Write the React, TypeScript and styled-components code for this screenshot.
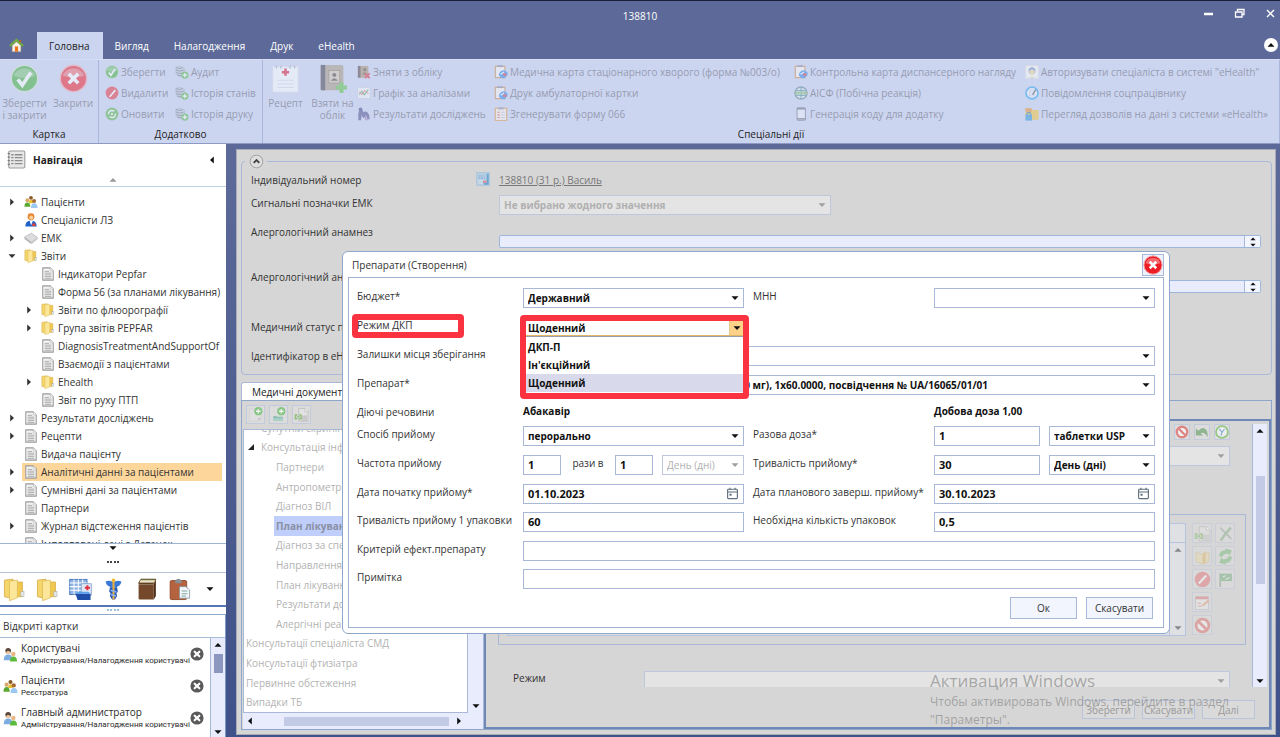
import React from "react";
import styled, { createGlobalStyle } from "styled-components";

const Global = createGlobalStyle`
  * { box-sizing: border-box; }
  body { margin: 0; background: #4a5a90; }
  body, button, input, select { font-family: "Open Sans", "Noto Sans", sans-serif; font-size: 10px; color: #333; }
  ul { list-style: none; margin: 0; padding: 0; }
  button { padding: 0; border: 0; background: none; }
`;

const line = "#a9b7d8";

/* ---------- icons ---------- */

const Svg = styled.svg<{ $s?: number }>`
  display: block;
  flex: none;
  width: ${(p) => p.$s ?? 16}px;
  height: ${(p) => p.$s ?? 16}px;
`;

type IconName =
  | "home" | "check" | "cross" | "edit" | "refresh" | "audit" | "recipe" | "bookPlus" | "bookX" | "chart" | "lungs"
  | "pageE" | "form" | "globe" | "phone" | "user" | "note" | "folderLock" | "doc" | "folder" | "people" | "doctor"
  | "disc" | "list" | "building" | "caduceus" | "book" | "clipboard" | "card" | "users" | "closeDot" | "calendar"
  | "pageAdd" | "folderAdd" | "pageLink" | "ban" | "undo" | "clock" | "tools" | "openBook" | "arrows" | "flag" | "redit"
  | "noEntry";

const shapes: Record<IconName, React.ReactNode> = {
  home: (
    <>
      <path d="M3.500 8v6.500h9V8L8 4z" fill="#f7f3ea" stroke="#c9b79a" strokeWidth=".6" />
      <path d="M1 8.600 8 2l7 6.600" fill="none" stroke="#6fae3c" strokeWidth="2.200" />
      <path d="M11 2h2v3.500l-2-2z" fill="#b5642f" />
      <rect x="6.300" y="9" width="3.400" height="5.500" fill="#e8741c" />
    </>
  ),
  check: (
    <>
      <circle cx="8" cy="8" r="7.300" fill="#3fae35" stroke="#cfe3cf" strokeWidth=".8" />
      <path d="M2 6.500a6.200 5.500 0 0 1 12 0q-6 2.500-12 0z" fill="#fff" opacity=".3" />
      <path d="m4.300 8.500 2.500 3.200 4.700-7" fill="none" stroke="#fff" strokeWidth="2" />
    </>
  ),
  cross: (
    <>
      <circle cx="8" cy="8" r="7.300" fill="#ee1c24" stroke="#f1a6a9" strokeWidth=".8" />
      <path d="M2 6.500a6.200 5.500 0 0 1 12 0q-6 2-12 0z" fill="#fff" opacity=".35" />
      <path d="m5.400 5.400 5.200 5.200m0-5.200-5.200 5.200" stroke="#fff" strokeWidth="2" />
    </>
  ),
  edit: (
    <>
      <circle cx="8" cy="8" r="7.300" fill="#e8343c" />
      <path d="m4.500 12 6.500-8 1.500 1.300L6 12.800z" fill="#fff" />
    </>
  ),
  refresh: (
    <>
      <circle cx="8" cy="8" r="7.300" fill="#57b548" />
      <circle cx="8" cy="8" r="4" fill="none" stroke="#fff" strokeWidth="1.600" strokeDasharray="9 3" />
      <circle cx="8" cy="8" r="1.200" fill="#fff" />
    </>
  ),
  audit: (
    <>
      <path d="M1 2.500q4-2 8 0l2 1.500v8q-5 2.500-8 0L1 9z" fill="#c4ccd6" stroke="#8f9aa8" strokeWidth=".6" />
      <path d="M1 3q4 2 8 0M1 5.800q4 2.500 9 0M1.500 8.600q4 2.500 9 0M2.500 11.300q3 1.500 5 .7" fill="none" stroke="#5f6c7e" strokeWidth="1" />
      <circle cx="11.200" cy="11.500" r="4.200" fill="#58b84c" />
      <path d="M11.200 9v5M8.700 11.500h5" stroke="#fff" strokeWidth="1.400" />
    </>
  ),
  recipe: (
    <>
      <rect x="1" y="1.500" width="14" height="14" fill="#fff" stroke="#dcdfea" strokeWidth=".5" />
      <path d="M3 1v1.500M5.500 1v1.500M10.500 1v1.500M13 1v1.500" stroke="#9aa2b5" strokeWidth=".7" />
      <path d="M8 2.500v4M6 4.500h4" stroke="#e0152e" strokeWidth="1.400" />
      <path d="M3.500 9h9M3.500 11h9M3.500 13h9" stroke="#d9dce8" strokeWidth=".6" />
    </>
  ),
  bookPlus: (
    <>
      <rect x="1.500" y=".5" width="12.500" height="14" rx="1" fill="#a89880" />
      <rect x="1.500" y=".5" width="2.500" height="14" fill="#3d3d46" />
      <rect x="6" y="3.500" width="6" height="7" fill="#d2c6ae" stroke="#7c6a48" strokeWidth=".4" />
      <circle cx="9" cy="6" r="1.100" fill="#4c4034" />
      <path d="M7 9.300q2-3 4 0z" fill="#4c4034" />
      <path d="M13 10v6M10 13h6" stroke="#57c23e" strokeWidth="2.200" />
    </>
  ),
  bookX: (
    <>
      <rect x="1" y="1" width="12" height="13.500" rx="1" fill="#a98d6a" />
      <rect x="1" y="1" width="3" height="13.500" fill="#4b4242" />
      <circle cx="8.800" cy="5.500" r="1.700" fill="#4d4136" />
      <path d="M6 10.500q2.800-4 5.600 0z" fill="#4d4136" />
      <path d="m9 9.500 5.500 5.500m0-5.500L9 15" stroke="#e02a3a" strokeWidth="2" />
    </>
  ),
  chart: (
    <>
      <rect x=".8" y="1.500" width="14.400" height="13" fill="#f4f5f8" stroke="#c0c6d4" strokeWidth=".8" />
      <path d="m2.500 10 3-4 3 4 4.500-6" fill="none" stroke="#4aa84a" strokeWidth="1.200" />
      <path d="m2.500 6.500 3 3.500 3.500-5 4 4" fill="none" stroke="#e05a5a" strokeWidth="1.100" />
    </>
  ),
  lungs: (
    <>
      <path d="M3 1.500q2-1 3 1.500l1.500 3q2-2 4.500 0 2.500 2.500 2.500 8h-2.500l-2-5-1.500 3.500H7L5.500 9l-1 6H1.500q-.5-8 1.500-13.500z" fill="#4a4f8c" />
      <circle cx="4" cy="2.500" r="2" fill="#3d4584" />
      <path d="M10 9v5.500h2" stroke="#9a6ab0" strokeWidth="1.300" fill="none" />
    </>
  ),
  pageE: (
    <>
      <path d="M1.500 1.500h11v13h-11z" fill="#fbf7ef" stroke="#c88a4a" strokeWidth="1.300" />
      <rect x="4" y=".3" width="6" height="2" fill="#7c86a0" />
      <path d="M6 9q4-5.500 9.500-.5v3l-3.500 3.500q-4.500.5-6.500-3z" fill="#2a88ec" />
      <path d="m7.500 10.500 4-2.500" stroke="#fff" strokeWidth="1.200" />
      <rect x="10.500" y="9.500" width="3.500" height="3" fill="#e0353a" />
    </>
  ),
  form: (
    <>
      <rect x="1.500" y="1.500" width="13" height="14" fill="#fdf3e8" stroke="#e0984a" strokeWidth="1.400" />
      <rect x="5" y=".3" width="6" height="2.500" fill="#8c94a8" />
      <path d="M4 6h2.500M4 9h2.500M4 12h2.500" stroke="#e05050" strokeWidth="1.200" />
      <path d="M8 6h4.500M8 9h4.500M8 12h4.500" stroke="#a8b4cc" strokeWidth=".8" />
    </>
  ),
  globe: (
    <>
      <circle cx="8" cy="8" r="6.800" fill="#e2eeea" stroke="#5f8494" strokeWidth="1.700" />
      <path d="M2.500 5.300h11M2.500 10.700h11M8 1.500v13" stroke="#3a8494" strokeWidth="1.100" />
      <rect x="1" y="6.500" width="14" height="3" fill="#6cb05a" />
      <path d="M3 8h10" stroke="#fff" strokeWidth=".8" strokeDasharray="2 1" />
    </>
  ),
  phone: (
    <>
      <rect x="3.500" y=".8" width="9.500" height="14.400" rx="1" fill="#eef1fa" stroke="#5c6478" strokeWidth="1" />
      <path d="M3.500 2.200h9.500M3.500 13.500h9.500" stroke="#4c5468" strokeWidth="1.500" />
    </>
  ),
  user: (
    <>
      <rect x="1" y="1" width="14" height="14" fill="#fffdf2" stroke="#e8e4d0" strokeWidth=".6" />
      <circle cx="8" cy="6.500" r="4" fill="#6c8fc0" />
      <path d="M5 6.500q3-2.500 6 0v3q-3 4-6 0z" fill="#f0d890" />
      <path d="M4 15q4-4 8 0z" fill="#e4dca8" />
    </>
  ),
  note: (
    <>
      <circle cx="8" cy="8" r="6.800" fill="#f8fbff" stroke="#2aa4f0" strokeWidth="2" />
      <path d="M5 4.500h6v7H5z" fill="#e6ebf2" stroke="#a4b0c0" strokeWidth=".5" />
      <path d="m8.500 10 4-6" stroke="#3a4454" strokeWidth="1.500" />
    </>
  ),
  folderLock: (
    <>
      <path d="M.5 1.500H7l1 2h7.500v11H.5z" fill="#f4c430" />
      <path d="M.5 1.500H7l1 2v1.500H.5z" fill="#e88a2c" />
      <rect x=".5" y="8.500" width="7.500" height="7" fill="#2a94dc" />
      <path d="M2.300 8.500V7q2-2 4 0v1.500" fill="none" stroke="#1a6ab0" strokeWidth="1.300" />
    </>
  ),
  doc: (
    <>
      <path d="M2 1h8.500L14 4.500V15H2z" fill="#f2f2f2" stroke="#9a9a9a" strokeWidth="1.200" strokeLinejoin="round" />
      <path d="M10.500 1v3.500H14" fill="#fff" stroke="#b0b0b0" strokeWidth=".7" />
      <path d="M4.200 5h5M4.200 7h7.600M4.200 9h7.600M4.200 11h7.600M4.200 13h7.600" stroke="#a4a4a4" strokeWidth="1" />
    </>
  ),
  folder: (
    <>
      <path d="M1 1.500 7 .8v13.500L1 13z" fill="#f4d66c" stroke="#d8ae48" strokeWidth=".6" />
      <path d="M8 2.800h5.500V13H8z" fill="#f0c850" stroke="#d8ae48" strokeWidth=".6" />
      <path d="M4.500 2.200 10 1.500v12.300l-5.500 2z" fill="#fbe69a" stroke="#dcb850" strokeWidth=".5" />
      <rect x="12.400" y="9.500" width="2.200" height="3.300" fill="#e4e8ee" stroke="#a8b0a0" strokeWidth=".4" />
    </>
  ),
  people: (
    <>
      <circle cx="8" cy="3.200" r="2.200" fill="#8a5a2c" />
      <path d="M5.500 9.500q0-4 2.500-4t2.500 4z" fill="#e8c030" />
      <circle cx="3.800" cy="6" r="2.200" fill="#d8a868" />
      <path d="M.5 13.500q0-5 3.300-5t3.400 5z" fill="#5aa832" />
      <circle cx="11.500" cy="6.800" r="2.300" fill="#a86a34" />
      <path d="M8 14.800q0-5.300 3.700-5.300t3.800 5.300z" fill="#9cc8f4" />
    </>
  ),
  doctor: (
    <>
      <circle cx="8" cy="4.300" r="3.900" fill="#e8842c" />
      <circle cx="8.200" cy="5.300" r="2.400" fill="#f8cf9c" />
      <path d="M1.500 15.500q0-7 6.500-7t6.500 7z" fill="#1f62c8" />
      <path d="M6.200 8.600 8.200 14l2-5.400z" fill="#fff" />
      <rect x="9.500" y="12" width="3.500" height="3" fill="#e84030" />
    </>
  ),
  disc: (
    <>
      <path d="m.5 7 8-4.500 7 5-7 5.500z" fill="#dcdcde" stroke="#a8a8ac" strokeWidth=".7" />
      <path d="m.5 7 8 6v2L.5 9z" fill="#b4b4b8" />
      <path d="m15.500 7.500-7 5.500v2l7-5.500z" fill="#c8c8cc" />
    </>
  ),
  list: (
    <>
      <rect x="1.500" y=".8" width="13.500" height="14.400" rx="1" fill="#e8e8e8" stroke="#9a9a9a" strokeWidth=".9" />
      <path d="M3.500 4h2M3.500 6.500h2M3.500 9h2M3.500 11.500h2M6.500 4h6.500M6.500 6.500h6.500M6.500 9h6.500M6.500 11.500h6.500" stroke="#8c8c8c" strokeWidth="1.100" />
      <path d="M.5 3h2M.5 6h2M.5 9h2M.5 12h2" stroke="#6c6c6c" strokeWidth=".8" />
    </>
  ),
  building: (
    <>
      <rect x=".5" y="1" width="12" height="10.500" fill="#8fb4e4" stroke="#4a7cc0" strokeWidth=".7" />
      <path d="M.5 3.500h12M.5 6h12M.5 8.500h12M3.500 1v10.500M6.500 1v10.500M9.500 1v10.500" stroke="#fff" strokeWidth=".7" />
      <rect x="8.500" y="4" width="7" height="8" fill="#dfe8f6" stroke="#7898c8" strokeWidth=".5" />
      <path d="M12.800 5v3.600M11 6.800h3.600" stroke="#e03040" strokeWidth="1.300" />
      <path d="M4.500 11h10.500v4.300H6z" fill="#1f4fa8" />
      <path d="m4.500 11 2-1.500h7L15 11z" fill="#5aa0ec" />
    </>
  ),
  caduceus: (
    <>
      <path d="M2.500 2.500q3-1.500 5.500.5 2.500-2 5.500-.5-.5 4-5.500 4T2.500 2.500z" fill="#3a78d8" />
      <path d="M5.500 6.500h5l.5 3-1 1 .5 2-1.500 2.500H7L5.500 12.500l.5-2-1-1z" fill="#2458b8" />
      <path d="M8 1v14" stroke="#e8b040" strokeWidth="1.400" />
      <path d="m6 8.500 4 1.200M6.200 11.500l3.600 1" stroke="#8cb4f0" strokeWidth="1" />
      <circle cx="8" cy="1.600" r="1.300" fill="#f0b830" />
    </>
  ),
  book: (
    <>
      <path d="m2.500 3.500 1.500-2.500h10.500l-1 2.500z" fill="#e8e0c8" stroke="#6c4a28" strokeWidth=".6" />
      <path d="M4 1h10.500" stroke="#6a6a38" strokeWidth="1" />
      <path d="M2.500 4.500h10.500V15H3.500q-1 0-1-1z" fill="#74482a" />
      <path d="M13 4.500 14.500 1.500v11L13 15z" fill="#4c2c14" />
      <path d="M2.500 4h10.500" stroke="#54340f" strokeWidth=".9" />
    </>
  ),
  clipboard: (
    <>
      <rect x="1.500" y="1.800" width="11.500" height="13.200" rx="1" fill="#b5623e" stroke="#8c4424" strokeWidth=".6" />
      <path d="M5 3.600V1.800q2.200-2.400 4.500 0v1.800z" fill="#8a9098" />
      <path d="M8 6h4.500L15 8.300V14H8z" fill="#f4f7fa" stroke="#8a9aa4" strokeWidth=".6" />
      <path d="M9.500 9h4M9.500 11h4M9.500 12.500h3" stroke="#7ca8a0" strokeWidth=".7" />
    </>
  ),
  card: (
    <>
      <rect x=".5" y=".5" width="15" height="15" fill="#b4cde2" stroke="#9fbdd8" strokeWidth=".5" />
      <path d="M3 4.500h7M3 7h7" stroke="#8fb2d6" strokeWidth="1.200" strokeDasharray="2 1" />
      <path d="M2.500 10h6M2.500 12.500h5" stroke="#dde8f0" strokeWidth="1.200" />
      <path d="M12.300 2h2.200v12.500H9v-2h3.300z" fill="#6aa6d4" />
      <rect x="8" y="10" width="4.300" height="2.300" fill="#d88c94" />
    </>
  ),
  users: (
    <>
      <circle cx="5.500" cy="4" r="3" fill="#5c4a3c" />
      <path d="M3.500 5q2-1.500 4 0v2q-2 1.500-4 0z" fill="#f0c8a0" />
      <path d="M.8 14q0-6 4.700-6t4.700 6z" fill="#7cace0" />
      <circle cx="11" cy="7.500" r="2.400" fill="#e8b888" />
      <path d="M7.500 15.500q0-5.500 3.700-5.500t3.800 5.500z" fill="#5cba3c" />
    </>
  ),
  closeDot: (
    <>
      <circle cx="8" cy="8" r="7.500" fill="#5a5a5a" />
      <path d="m5.300 5.300 5.400 5.400m0-5.400-5.400 5.400" stroke="#fff" strokeWidth="2.400" strokeLinecap="round" />
    </>
  ),
  calendar: (
    <>
      <rect x="2" y="2.800" width="12" height="11.500" rx="1" fill="none" stroke="#5f6f7c" strokeWidth="1.400" />
      <path d="M2 6.200h12M4.800 1v2.500M11.200 1v2.500" stroke="#5f6f7c" strokeWidth="1.400" />
      <rect x="4.300" y="8.300" width="2.600" height="2.400" fill="#5f6f7c" />
    </>
  ),
  pageAdd: (
    <>
      <path d="M1.500 2h13v10l-3 3h-10z" fill="#e2e2e2" stroke="#c0c4cc" strokeWidth=".6" />
      <path d="m9.500 13 4-2-1 3z" fill="#b4b4b4" />
      <circle cx="11" cy="4.500" r="4.400" fill="#4fb84a" />
      <path d="M11 2v5M8.500 4.500h5" stroke="#fff" strokeWidth="1.400" />
    </>
  ),
  folderAdd: (
    <>
      <path d="M2.500 9.500h3l1 1h6V15h-10z" fill="#5cae9c" />
      <path d="M2.500 12h10v3h-10z" fill="#8ccabc" />
      <circle cx="11" cy="4.500" r="4.400" fill="#4fb84a" />
      <path d="M11 2v5M8.500 4.500h5" stroke="#fff" strokeWidth="1.400" />
    </>
  ),
  pageLink: (
    <>
      <path d="M5 1.500h6.500L15 5v10H5z" fill="#e6e6e6" stroke="#a4a4a4" strokeWidth=".8" />
      <path d="M11.500 1.500V5H15" fill="#fff" stroke="#9c9c9c" strokeWidth=".6" />
      <path d="M8 9h6v6H8z" fill="#bdbdbd" />
      <path d="M3.500 8.500h-2v4h2M5.500 8.500h2v4h-2M3 10.500h3" fill="none" stroke="#5fae3c" strokeWidth="1.500" />
    </>
  ),
  ban: (
    <>
      <circle cx="8" cy="8" r="7.300" fill="#e85058" />
      <path d="m4.500 11.800 7-7.600" stroke="#fff" strokeWidth="2.200" />
    </>
  ),
  undo: (
    <>
      <path d="M1 4v8h8L6.500 9.500q4-2.500 8 4.500.5-10-5.500-10.500Q6.500 3.500 4 6.500z" fill="#5c9a5c" />
    </>
  ),
  clock: (
    <>
      <circle cx="8" cy="8" r="6.800" fill="#f4f8fc" stroke="#6ab848" strokeWidth="2" />
      <path d="m5 4.500 3 4 2.800-4M8 8.500 7 12" stroke="#4c8cc8" strokeWidth="1.200" fill="none" />
    </>
  ),
  tools: (
    <>
      <path d="M3 2.500 13.500 13" stroke="#8a9a94" strokeWidth="1.800" />
      <path d="M13 2.500 7.500 9l-4 5.500" stroke="#6aa06a" strokeWidth="2.400" fill="none" />
    </>
  ),
  openBook: (
    <>
      <path d="m2 4 6 2 6-2v9l-6 2-6-2z" fill="#f0dc9c" stroke="#c8a85c" strokeWidth=".6" />
      <path d="M8 6v9l3-1V2z" fill="#e0a840" />
    </>
  ),
  arrows: (
    <>
      <path d="M2 8q0-6 6-6l-.5-1.500L14 2l-2 5-1.500-1.500Q6 5 5.500 8z" fill="#55b058" />
      <path d="M14 8q0 6-6 6l.5 1.500L2 14l2-5 1.500 1.500Q10 11 10.500 8z" fill="#55b058" />
    </>
  ),
  flag: (
    <>
      <path d="M3 2v13" stroke="#6c8c6c" strokeWidth="1.500" />
      <path d="M3 2.500h11v7H3z" fill="#4c9c5c" />
      <path d="M5.500 5.500 8 4.500M8 8l4-2" stroke="#fff" strokeWidth="1" />
    </>
  ),
  redit: (
    <>
      <rect x="1.500" y="2.500" width="12" height="12" fill="#f4f4f8" stroke="#a0a8c0" strokeWidth=".8" />
      <path d="M1.500 2.500h12v2.500h-12z" fill="#e05a5a" />
      <path d="m8 11 6-5" stroke="#e89060" strokeWidth="2" />
      <path d="M3.500 11.500h4M3.500 8.500h3" stroke="#d88080" strokeWidth="1.200" />
    </>
  ),
  noEntry: (
    <>
      <circle cx="8" cy="8" r="6" fill="#fff" stroke="#e04a48" strokeWidth="2.600" />
      <path d="m4 4 8 8" stroke="#e04a48" strokeWidth="2.600" />
    </>
  ),
};

const Icon = ({ name, s }: { name: IconName; s?: number }) => (
  <Svg viewBox="0 0 16 16" $s={s} aria-hidden="true">{shapes[name]}</Svg>
);

const turns = { up: 180, down: 0, left: 90, right: 270 };
const ArrowSvg = styled.svg<{ $dir: keyof typeof turns }>`
  display: block;
  flex: none;
  width: 8px;
  height: 8px;
  pointer-events: none;
  transform: rotate(${(p) => turns[p.$dir]}deg);
`;
const Arrow = ({ dir = "down", color = "#111" }: { dir?: keyof typeof turns; color?: string }) => (
  <ArrowSvg viewBox="0 0 8 8" $dir={dir} aria-hidden="true"><path d="M.5 2.200h7L4 6z" fill={color} /></ArrowSvg>
);

/* ---------- window frame ---------- */

const Window = styled.div`
  position: relative;
  display: flex;
  flex-direction: column;
  height: 100vh;
  overflow: hidden;
  background: linear-gradient(#5d6a99, #5d6a99 144px, #3f5189);
`;
const TitleBar = styled.header`
  display: grid;
  grid-template-columns: 1fr auto 1fr;
  height: 32px;
  border-top: 1px solid #1b2036;
  color: #fff;
  line-height: 31px;
`;
const Title = styled.h1`
  margin: 0;
  font-size: 10px;
  font-weight: 400;
`;
const WindowButtons = styled.div`
  display: flex;
  justify-content: flex-end;
  gap: 17px;
  padding: 5px 2px 0 0;
`;
const WindowButton = styled.button`
  width: 14px;
  height: 14px;
`;
const TabBar = styled.nav`
  display: flex;
  align-items: stretch;
  height: 27px;
  padding-right: 1px;
`;
const HomeButton = styled.button`
  display: grid;
  place-items: center;
  width: 37px;
  padding-right: 4px;
`;
const RibbonTab = styled.button<{ $active?: boolean }>`
  padding: 0 13px 0 12px;
  background: ${(p) => (p.$active ? "#ccd5f0" : "none")};
  color: ${(p) => (p.$active ? "#222" : "#fff")};
`;
const CollapseButton = styled.button`
  display: grid;
  place-items: center;
  width: 14px;
  height: 14px;
  margin: 6px 1px 0 auto;
  border-radius: 50%;
  background: #fff;
`;

/* ---------- ribbon ---------- */

const Ribbon = styled.div`
  display: flex;
  height: 85px;
  background: #ccd5f0;
  border-top: 1px solid #d6def4;
  border-bottom: 1px solid #8d9bc4;
`;
const RibbonGroup = styled.section<{ $w?: number }>`
  display: flex;
  flex-direction: column;
  flex: ${(p) => (p.$w ? `none` : "1")};
  width: ${(p) => (p.$w ? `${p.$w}px` : "auto")};
  min-width: 0;
  border-right: 1px solid #a9b6dc;
`;
const RibbonBody = styled.div`
  display: flex;
  flex: 1;
  padding-top: 1px;
`;
const GroupLabel = styled.h2`
  margin: 0;
  font-size: 10px;
  font-weight: 400;
  line-height: 18px;
  text-align: center;
  color: #222;
`;
const BigButton = styled.button<{ $w: number }>`
  display: flex;
  flex-direction: column;
  align-items: center;
  gap: 4px;
  flex: none;
  width: ${(p) => p.$w}px;
  padding-top: 3px;
  line-height: 12px;
  color: #969cb0;
  svg { opacity: 0.5; }
`;
const RibbonColumn = styled.div<{ $w: number }>`
  flex: none;
  width: ${(p) => p.$w}px;
`;
const SmallButton = styled.button`
  display: flex;
  align-items: center;
  gap: 2px;
  height: 21px;
  color: #969cb0;
  white-space: nowrap;
  svg { opacity: 0.5; }
`;
const Column = ({ w, items }: { w: number; items: [IconName, string][] }) => (
  <RibbonColumn $w={w}>
    {items.map(([icon, text]) => (
      <SmallButton key={text}><Icon name={icon} s={14} />{text}</SmallButton>
    ))}
  </RibbonColumn>
);

/* ---------- sidebar ---------- */

const Body = styled.div`
  display: flex;
  flex: 1;
  min-height: 0;
`;
const Sidebar = styled.aside`
  display: flex;
  flex-direction: column;
  flex: none;
  width: 226px;
  background: #fff;
`;
const NavHead = styled.div`
  height: 43px;
  border-bottom: 1px solid #bfd3e2;
`;
const NavTitle = styled.div`
  display: flex;
  align-items: center;
  gap: 7px;
  height: 32px;
  padding: 0 10px 1px 7px;
  font-weight: 700;
  color: #222;
  button { margin-left: auto; }
`;
const NavList = styled.ul`
  flex: 1;
  min-height: 0;
  padding: 6px 4px 0 8px;
  overflow: hidden;
`;
const NavItem = styled.li<{ $level: number }>`
  display: flex;
  align-items: center;
  height: 18px;
  padding-left: ${(p) => p.$level * 17}px;
  white-space: nowrap;
`;
const Twist = styled.span`
  width: 14px;
`;
const NavLabel = styled.span<{ $selected?: boolean }>`
  display: flex;
  align-items: center;
  gap: 3px;
  flex: 1;
  min-width: 0;
  height: 18px;
  padding-left: 2px;
  overflow: hidden;
  background: ${(p) => (p.$selected ? "#fdd69b" : "none")};
`;
const ScrollHint = styled.div`
  display: flex;
  justify-content: center;
`;
const GripBar = styled.div<{ $h: number }>`
  display: flex;
  flex-direction: column;
  align-items: center;
  justify-content: space-between;
  height: ${(p) => p.$h}px;
  padding: 2px 0;
`;
const Grip = styled.span<{ $color: string }>`
  width: 12px;
  border-top: 2px dotted ${(p) => p.$color};
`;
const NavFoot = styled.div`
  border-top: 1px solid #9db4d2;
`;
const Shortcuts = styled.div`
  display: flex;
  align-items: center;
  gap: 10px;
  height: 35px;
  padding: 0 12px 0 3px;
  border-top: 1px solid #b4c6de;
  border-bottom: 2px solid #5577b5;
  button:last-child { margin-left: auto; }
`;
const Cards = styled.section`
  flex: none;
  height: 123px;
  border-top: 1px solid #8eabcf;
  border-right: 1px solid #7b9bc8;
`;
const CardsTitle = styled.h2`
  margin: 0;
  padding-left: 3px;
  font-size: 10px;
  font-weight: 400;
  line-height: 22px;
  border-bottom: 1px solid #a9bcd8;
`;
const CardsBody = styled.div`
  display: flex;
  height: 100px;
`;
const CardList = styled.ul`
  flex: 1;
  min-width: 0;
  overflow: hidden;
`;
const CardItem = styled.li`
  display: flex;
  align-items: center;
  gap: 3px;
  height: 32px;
  padding: 0 6px 0 3px;
`;
const CardText = styled.div`
  flex: 1;
  min-width: 0;
  line-height: 13px;
  white-space: nowrap;
  color: #2a2a2a;
  small { display: block; font-family: Roboto, sans-serif; font-size: 8px; line-height: 11px; }
`;

const VScroll = styled.div<{ $w: number }>`
  display: flex;
  flex-direction: column;
  align-items: center;
  flex: none;
  width: ${(p) => p.$w}px;
  padding: 3px 0 2px;
  background: #e8ecfd;
  border-left: 1px solid ${line};
`;
const Track = styled.div<{ $before: number; $thumb: number; $after: number; $dark?: boolean }>`
  display: grid;
  grid-template-rows: ${(p) => `${p.$before}fr ${p.$thumb}fr ${p.$after}fr`};
  flex: 1;
  width: 9px;
  &::after {
    content: "";
    grid-row: 2;
    background: ${(p) => (p.$dark ? "#8c97c0" : "#c3cae6")};
  }
`;

type Nav = [level: number, twist: "" | "right" | "down", icon: IconName, text: string];
const navItems: Nav[] = [
  [0, "right", "people", "Пацієнти"],
  [0, "", "doctor", "Спеціалісти ЛЗ"],
  [0, "right", "disc", "ЕМК"],
  [0, "down", "folder", "Звіти"],
  [1, "", "doc", "Індикатори Pepfar"],
  [1, "", "doc", "Форма 56 (за планами лікування)"],
  [1, "right", "folder", "Звіти по флюорографії"],
  [1, "right", "folder", "Група звітів PEPFAR"],
  [1, "", "doc", "DiagnosisTreatmentAndSupportOf"],
  [1, "", "doc", "Взаємодії з пацієнтами"],
  [1, "right", "folder", "Ehealth"],
  [1, "", "doc", "Звіт по руху ПТП"],
  [0, "right", "doc", "Результати досліджень"],
  [0, "right", "doc", "Рецепти"],
  [0, "", "doc", "Видача пацієнту"],
  [0, "right", "doc", "Аналітичні данні за пацієнтами"],
  [0, "right", "doc", "Сумнівні дані за пацієнтами"],
  [0, "", "doc", "Партнери"],
  [0, "right", "doc", "Журнал відстеження пацієнтів"],
  [0, "", "doc", "Імпортовані дані з Датачек"],
];
const shortcuts: IconName[] = ["folder", "folder", "building", "caduceus", "book", "clipboard"];
const cards: [IconName, string, string][] = [
  ["users", "Користувачі", "Адміністрування/Налагодження користувачі"],
  ["people", "Пацієнти", "Реєстратура"],
  ["users", "Главный администратор", "Адміністрування/Налагодження користувачі"],
];

/* ---------- main card ---------- */

const Main = styled.main`
  position: relative;
  display: flex;
  flex-direction: column;
  gap: 7px;
  flex: 1;
  min-width: 0;
  margin: 5px 4px 2px 10px;
  padding: 11px 3px 4px 4px;
  background: #d6d6d6;
  border: 1px solid #a8acb6;
`;
const Patient = styled.section`
  position: relative;
  padding: 8px 10px 8px 9px;
  border: 1px solid ${line};
  border-radius: 4px;
`;
const Toggle = styled.button`
  position: absolute;
  top: -8px;
  left: 3px;
  display: grid;
  place-items: center;
  width: 22px;
  height: 15px;
  background: #d6d6d6;
`;
const PatientRow = styled.div<{ $h: number }>`
  display: grid;
  grid-template-columns: 225px 23px 1fr;
  align-items: start;
  height: ${(p) => p.$h}px;
  line-height: 20px;
`;
const PatientLink = styled.a`
  grid-column: 3;
  color: #777;
`;
const IconSlot = styled.span`
  padding-top: 2px;
`;
const Spin = styled.div`
  display: flex;
  grid-column: 3;
  height: 13px;
  margin-top: 13px;
  border: 1px solid #9cb6dc;
  border-radius: 2px;
  background: #e8ecfd;
  input { flex: 1; min-width: 0; padding: 0; border: 0; border-right: 1px solid ${line}; background: none; }
  span { display: grid; align-content: center; justify-content: center; width: 15px; background: #f4f6ff; }
  svg { width: 12px; height: 6px; }
`;

const SelectWrap = styled.div<{ $dim?: boolean; $w?: number; $light?: boolean }>`
  position: relative;
  width: ${(p) => (p.$w ? `${p.$w}px` : "auto")};
  height: 20px;
  border: 1px solid ${(p) => (p.$dim ? "#bfc7dc" : line)};
  background: ${(p) => (p.$light ? "#e4e4e4" : "#fff")};
  > svg { position: absolute; right: 4px; top: 5px; }
`;
const NativeSelect = styled.select<{ $dim?: boolean; $plain?: boolean }>`
  appearance: none;
  display: block;
  width: 100%;
  height: 18px;
  padding: 0 14px 0 4px;
  border: 0;
  background: none;
  opacity: 1;
  font-weight: ${(p) => (p.$plain ? 400 : 700)};
  color: ${(p) => (p.$dim ? "#b0b0b0" : "#111")};
`;
type SelectProps = { id?: string; value?: string; label?: string; dim?: boolean; plain?: boolean; light?: boolean; w?: number };
const Select = ({ id, value = "", label, dim, plain, light, w }: SelectProps) => (
  <SelectWrap $dim={dim} $w={w} $light={light}>
    <NativeSelect id={id} aria-label={label} disabled={dim} $dim={dim} $plain={plain}><option>{value}</option></NativeSelect>
    <Arrow color={dim ? "#a0a0a0" : "#111"} />
  </SelectWrap>
);
const SignalSlot = styled.div`
  grid-column: 3;
  padding-top: 2px;
`;

const Records = styled.section`
  display: flex;
  flex-direction: column;
  flex: 1;
  min-height: 0;
`;
const RecordTab = styled.button`
  align-self: flex-start;
  height: 18px;
  padding: 0 10px;
  background: #fff;
  border: 1px solid ${line};
  border-bottom: 0;
  border-radius: 3px 3px 0 0;
  color: #222;
`;
const RecordBody = styled.div`
  display: flex;
  flex: 1;
  min-height: 0;
  border: 1px solid #8fa6cc;
`;
const TreePane = styled.div`
  display: flex;
  flex-direction: column;
  flex: none;
  width: 242px;
  border-right: 1px solid #a9b7d8;
`;
const TreeTools = styled.div`
  display: flex;
  gap: 4px;
  height: 28px;
  padding: 4px;
`;
const ToolButton = styled.button<{ $s?: number }>`
  display: grid;
  place-items: center;
  width: ${(p) => p.$s ?? 19}px;
  height: ${(p) => p.$s ?? 19}px;
  border: 1px solid #c3cadb;
  background: #dcdcdc;
  svg { opacity: 0.6; }
`;
const TreeArea = styled.div`
  display: flex;
  flex: 1;
  min-height: 0;
  margin-left: 1px;
  background: #e8ecfd;
`;
const TreeBox = styled.div`
  flex: 1;
  overflow: hidden;
  border: 1px solid ${line};
  background: #fff;
`;
const TreeList = styled.ul`
  display: grid;
  grid-auto-rows: 1fr;
  height: calc(100% + 12px);
  margin-top: -12px;
  color: #b2b2b2;
  white-space: nowrap;
`;
const TreeItem = styled.li<{ $level: number; $active?: boolean }>`
  display: flex;
  align-items: center;
  gap: 7px;
  margin-left: ${(p) => [0, 2, 30, 15][p.$level]}px;
  padding-left: 2px;
  background: ${(p) => (p.$active ? "#bfcefb" : "none")};
  font-weight: ${(p) => (p.$active ? 700 : 400)};
  color: ${(p) => (p.$active ? "#8a90a4" : "inherit")};
`;
const TreeScroll = styled.div`
  display: flex;
  align-items: flex-end;
  justify-content: center;
  flex: none;
  width: 15px;
  padding-bottom: 3px;
`;
const HScroll = styled.div`
  display: flex;
  align-items: center;
  gap: 30px;
  flex: none;
  height: 16px;
  margin-left: 1px;
  padding: 0 20px 0 3px;
  background: #e8ecfd;
`;
const HThumb = styled.div`
  flex: 1;
  height: 9px;
  margin-right: -24px;
  background: #c3cae6;
`;
const Corner = styled.svg`
  display: block;
  width: 6px;
  height: 6px;
`;

const DetailPane = styled.div`
  display: flex;
  flex-direction: column;
  flex: 1;
  min-width: 0;
  padding-top: 18px;
`;
const Detail = styled.div`
  display: flex;
  flex-direction: column;
  flex: 1;
  min-height: 0;
  border: 2px solid #7088b6;
`;
const DetailRow = styled.div`
  display: flex;
  flex: 1;
  min-height: 0;
  padding: 3px 2px 0 0;
`;
const DetailForm = styled.div`
  flex: 1;
  min-width: 0;
  padding: 0 22px 0 12px;
  overflow: hidden;
`;
const DetailTools = styled.div`
  display: flex;
  justify-content: flex-end;
  gap: 4px;
  margin-bottom: 6px;
`;
const PlanBox = styled.div`
  display: flex;
  gap: 6px;
  height: 131px;
  margin: 48px -16px 26px 0;
  padding: 8px;
  border: 1px solid ${line};
`;
const PlanTable = styled.div`
  display: grid;
  grid-template: 19px 1fr / 1fr 16px;
  flex: 1;
  border: 1px solid #b7c4e0;
  background: #dfe0e4;
`;
const PlanHead = styled.div`
  grid-column: 1 / 3;
  border-bottom: 1px solid #b7c4e0;
`;
const PlanScroll = styled.div`
  grid-column: 2;
  display: flex;
  flex-direction: column;
  align-items: center;
  justify-content: space-between;
  padding: 3px 0;
  border-left: 1px solid #b7c4e0;
`;
const PlanTools = styled.div`
  display: grid;
  grid-template: repeat(5, 20px) / 20px 20px;
  gap: 3px;
  margin-right: 2px;
  opacity: 0.6;
`;
const ModeRow = styled.div`
  display: grid;
  grid-template-columns: 131px 1fr;
  padding-left: 15px;
  line-height: 15px;
`;
const DetailFoot = styled.div`
  display: flex;
  justify-content: flex-end;
  gap: 7px;
  height: 40px;
  padding: 13px 14px 0;
`;
const FadedButton = styled.button`
  width: 53px;
  height: 19px;
  border: 1px solid #bac4dc;
  background: #dadada;
  color: #999;
`;

const medTree: [number, string, boolean?][] = [
  [3, "Супутній скринінг"],
  [1, "Консультація інфекціоніста"],
  [2, "Партнери"],
  [2, "Антропометрія"],
  [2, "Діагноз ВІЛ"],
  [2, "План лікування", true],
  [2, "Діагноз за спеціалістом"],
  [2, "Направлення"],
  [2, "План лікування ТБ"],
  [2, "Результати досліджень"],
  [2, "Алергічні реакції"],
  [0, "Консультації спеціаліста СМД"],
  [0, "Консультації фтизіатра"],
  [0, "Первинне обстеження"],
  [0, "Випадки ТБ"],
];

/* ---------- dialog ---------- */

const Overlay = styled.div`
  position: absolute;
  inset: 0;
  display: grid;
  place-items: center;
`;
const Dialog = styled.div`
  width: 828px;
  max-width: 100%;
  padding: 0 5px 5px;
  background: #fff;
  border: 1px solid #8ea7cc;
  border-radius: 6px;
`;
const DialogHead = styled.div`
  display: flex;
  align-items: center;
  justify-content: space-between;
  height: 25px;
  padding: 2px 0 0 4px;
`;
const CloseButton = styled.button`
  display: grid;
  place-items: center;
  width: 22px;
  height: 22px;
  border: 1px solid ${line};
  background: #eef2fc;
`;
const Form = styled.form`
  padding: 10px 8px 8px;
  border: 1px solid #9fb2d4;
`;
const FormRow = styled.div<{ $wide?: boolean; $gap?: number; $h?: number }>`
  display: grid;
  grid-template-columns: ${(p) => (p.$wide ? "166px 1fr" : "166px 1fr 190px 1fr")};
  align-items: start;
  height: ${(p) => p.$h ?? 20}px;
  margin-bottom: ${(p) => p.$gap ?? 9}px;
`;
const Label = styled.label<{ $second?: boolean }>`
  position: relative;
  padding-left: ${(p) => (p.$second ? 9 : 0)}px;
  line-height: 16px;
  white-space: nowrap;
`;
const Field = styled.div`
  display: flex;
  align-items: center;
  height: 20px;
  padding: 0 4px;
  border: 1px solid ${line};
  background: #fff;
  input { flex: 1; width: 100%; min-width: 0; height: 18px; padding: 0; border: 0; background: none; font-size: 11px; font-weight: 700; color: #111; }
`;
const Value = styled.strong`
  line-height: 14px;
  color: #111;
`;
const Pair = styled.div<{ $cols: string }>`
  display: grid;
  grid-template-columns: ${(p) => p.$cols};
  gap: 9px;
  line-height: 16px;
`;
const Between = styled.span`
  text-align: center;
`;
const Marked = styled.span`
  position: relative;
`;
const LabelMark = styled.span`
  position: absolute;
  top: -3px;
  left: -5px;
  width: 112px;
  height: 24px;
  border: 6px solid #fb3341;
  border-radius: 4px;
`;
const ModeMark = styled.div`
  position: absolute;
  z-index: 2;
  top: -2px;
  left: -3px;
  right: -5px;
  border: 6px solid #fb3341;
  border-radius: 4px;
  background: #fff;
`;
const ModeCell = styled.div`
  position: relative;
`;
const ModeTop = styled.div`
  display: flex;
  height: 15px;
  border-bottom: 1px solid #e0b866;
  select { height: 12px; padding-left: 2px; }
`;
const ModeDrop = styled.span`
  display: grid;
  place-items: center;
  flex: none;
  width: 14px;
  background: #fcd388;
  border-left: 1px solid #e8c888;
`;
const Options = styled.ul`
  padding: 1px 0;
  border-top: 1px solid #9a9fb0;
  font-weight: 700;
  color: #111;
`;
const Option = styled.li<{ $on?: boolean }>`
  height: 18px;
  padding-left: 2px;
  line-height: 18px;
  background: ${(p) => (p.$on ? "#d8d9ea" : "none")};
`;
const Actions = styled.div`
  display: flex;
  justify-content: flex-end;
  gap: 9px;
  padding-right: 2px;
`;
const ActionButton = styled.button`
  width: 67px;
  height: 22px;
  border: 1px solid ${line};
  background: #f2f5fd;
`;

const Watermark = styled.p`
  position: absolute;
  right: 20px;
  bottom: 8px;
  width: 330px;
  margin: 0;
  font-size: 12px;
  line-height: 18px;
  color: rgba(125, 125, 125, 0.6);
  pointer-events: none;
  b { display: block; font-size: 17px; font-weight: 400; line-height: 25px; }
`;

export default function App() {
  return (
    <Window>
      <Global />
      <TitleBar>
        <span />
        <Title>138810</Title>
        <WindowButtons>
          <WindowButton aria-label="Згорнути">
            <Svg viewBox="0 0 14 14" $s={14}><path d="M2 8h9" stroke="#fff" strokeWidth="2.500" /></Svg>
          </WindowButton>
          <WindowButton aria-label="Розгорнути">
            <Svg viewBox="0 0 14 14" $s={14}>
              <path d="M4.500 5V3.500h6.500v5H9.500M2.500 6h6.500v5H2.500z" fill="none" stroke="#fff" strokeWidth="1.300" />
            </Svg>
          </WindowButton>
          <WindowButton aria-label="Закрити вікно">
            <Svg viewBox="0 0 14 14" $s={14}><path d="m3 4 7 7m0-7-7 7" stroke="#fff" strokeWidth="1.400" /></Svg>
          </WindowButton>
        </WindowButtons>
      </TitleBar>
      <TabBar>
        <HomeButton aria-label="Додому"><Icon name="home" s={15} /></HomeButton>
        <RibbonTab $active>Головна</RibbonTab>
        <RibbonTab>Вигляд</RibbonTab>
        <RibbonTab>Налагодження</RibbonTab>
        <RibbonTab>Друк</RibbonTab>
        <RibbonTab>eHealth</RibbonTab>
        <CollapseButton aria-label="Згорнути стрічку"><Arrow dir="up" /></CollapseButton>
      </TabBar>
      <Ribbon>
        <RibbonGroup $w={99}>
          <RibbonBody>
            <BigButton $w={49}><Icon name="check" s={29} />Зберегти і закрити</BigButton>
            <BigButton $w={48}><Icon name="cross" s={29} />Закрити</BigButton>
          </RibbonBody>
          <GroupLabel>Картка</GroupLabel>
        </RibbonGroup>
        <RibbonGroup $w={164}>
          <RibbonBody>
            <RibbonColumn $w={6} />
            <Column w={70} items={[["check", "Зберегти"], ["edit", "Видалити"], ["refresh", "Оновити"]]} />
            <Column w={84} items={[["audit", "Аудит"], ["audit", "Історія станів"], ["audit", "Історія друку"]]} />
          </RibbonBody>
          <GroupLabel>Додатково</GroupLabel>
        </RibbonGroup>
        <RibbonGroup>
          <RibbonBody>
            <BigButton $w={45}><Icon name="recipe" s={29} />Рецепт</BigButton>
            <BigButton $w={49}><Icon name="bookPlus" s={29} />Взяти на облік</BigButton>
            <Column w={137} items={[["bookX", "Зняти з обліку"], ["chart", "Графік за аналізами"], ["lungs", "Результати досліджень"]]} />
            <Column w={300} items={[["pageE", "Медична карта стаціонарного хворого (форма №003/о)"], ["pageE", "Друк амбулаторної картки"], ["form", "Згенерувати форму 066"]]} />
            <Column w={231} items={[["pageE", "Контрольна карта диспансерного нагляду"], ["globe", "АІСФ (Побічна реакція)"], ["phone", "Генерація коду для додатку"]]} />
            <Column w={250} items={[["user", "Авторизувати спеціаліста в системі \"eHealth\""], ["note", "Повідомлення соцпрацівнику"], ["folderLock", "Перегляд дозволів на дані з системи «eHealth»"]]} />
          </RibbonBody>
          <GroupLabel>Спеціальні дії</GroupLabel>
        </RibbonGroup>
      </Ribbon>

      <Body>
        <Sidebar>
          <NavHead>
            <NavTitle>
              <Icon name="list" s={19} />Навігація
              <button aria-label="Сховати"><Arrow dir="left" /></button>
            </NavTitle>
            <ScrollHint><Arrow dir="up" color="#999" /></ScrollHint>
          </NavHead>
          <NavList>
            {navItems.map(([level, twist, icon, text]) => (
              <NavItem key={text} $level={level}>
                <Twist>{twist && <Arrow dir={twist} color="#333" />}</Twist>
                <NavLabel $selected={text.startsWith("Аналітичні")}><Icon name={icon} s={14} />{text}</NavLabel>
              </NavItem>
            ))}
          </NavList>
          <NavFoot>
            <ScrollHint><Arrow /></ScrollHint>
            <GripBar $h={20}><span /><Grip $color="#444" /><span /></GripBar>
            <Shortcuts>
              {shortcuts.map((name, i) => (
                <button key={i} aria-label={`Розділ ${i + 1}`}><Icon name={name} s={23} /></button>
              ))}
              <button aria-label="Ще"><Arrow /></button>
            </Shortcuts>
            <GripBar $h={7}><Grip $color="#9fc0e0" /></GripBar>
          </NavFoot>
          <Cards>
            <CardsTitle>Відкриті картки</CardsTitle>
            <CardsBody>
              <CardList>
                {cards.map(([icon, title, path]) => (
                  <CardItem key={title}>
                    <Icon name={icon} s={15} />
                    <CardText>{title}<small>{path}</small></CardText>
                    <button aria-label={`Закрити ${title}`}><Icon name="closeDot" s={14} /></button>
                  </CardItem>
                ))}
              </CardList>
              <VScroll $w={15}>
                <Arrow dir="up" />
                <Track $before={5} $thumb={20} $after={58} $dark />
                <Arrow />
              </VScroll>
            </CardsBody>
          </Cards>
        </Sidebar>

        <Main>
          <Patient>
            <Toggle aria-label="Згорнути групу">
              <Svg viewBox="0 0 16 16" $s={15}>
                <circle cx="8" cy="8" r="6.800" fill="#dedede" stroke="#9c9c9c" strokeWidth="1" />
                <path d="m5 9.500 3-3 3 3" fill="none" stroke="#444" strokeWidth="2" />
              </Svg>
            </Toggle>
            <PatientRow $h={23}>
              <span>Індивідуальний номер</span>
              <IconSlot><Icon name="card" s={14} /></IconSlot>
              <PatientLink href="#patient">138810 (31 р.) Василь</PatientLink>
            </PatientRow>
            <PatientRow $h={29}>
              <label htmlFor="signal">Сигнальні позначки ЕМК</label>
              <SignalSlot><Select id="signal" value="Не вибрано жодного значення" dim light w={332} /></SignalSlot>
            </PatientRow>
            <PatientRow $h={45}>
              <label htmlFor="allergy">Алергологічний анамнез</label>
              <Spin><input id="allergy" /><span><Arrow dir="up" /><Arrow /></span></Spin>
            </PatientRow>
            <PatientRow $h={50}>
              <label htmlFor="allergy2">Алергологічний анамнез</label>
              <Spin><input id="allergy2" /><span><Arrow dir="up" /><Arrow /></span></Spin>
            </PatientRow>
            <PatientRow $h={29}><span>Медичний статус пацієнта</span></PatientRow>
            <PatientRow $h={20}><span>Ідентифікатор в eHealth</span></PatientRow>
          </Patient>

          <Records>
            <RecordTab>Медичні документи</RecordTab>
            <RecordBody>
              <TreePane>
                <TreeTools>
                  <ToolButton aria-label="Новий документ"><Icon name="pageAdd" s={15} /></ToolButton>
                  <ToolButton aria-label="Нова папка"><Icon name="folderAdd" s={15} /></ToolButton>
                  <ToolButton aria-label="Прив'язати"><Icon name="pageLink" s={15} /></ToolButton>
                </TreeTools>
                <TreeArea>
                  <TreeBox>
                    <TreeList>
                      {medTree.map(([level, text, active]) => (
                        <TreeItem key={text} $level={level} $active={active}>
                          {level === 1 && <Corner viewBox="0 0 6 6"><path d="M6 0v6H0z" fill="#222" /></Corner>}
                          {text}
                        </TreeItem>
                      ))}
                    </TreeList>
                  </TreeBox>
                  <TreeScroll><Arrow /></TreeScroll>
                </TreeArea>
                <HScroll><Arrow dir="left" /><HThumb /><Arrow dir="right" /></HScroll>
              </TreePane>

              <DetailPane>
                <Detail>
                  <DetailRow>
                    <DetailForm>
                      <DetailTools>
                        <ToolButton $s={16} aria-label="Заборонити"><Icon name="noEntry" s={14} /></ToolButton>
                        <ToolButton $s={16} aria-label="Повернути"><Icon name="undo" s={14} /></ToolButton>
                        <ToolButton $s={16} aria-label="Історія"><Icon name="clock" s={14} /></ToolButton>
                      </DetailTools>
                      <Select label="Схема" dim light />
                      <PlanBox>
                        <PlanTable>
                          <PlanHead />
                          <PlanScroll><Arrow dir="up" color="#888" /><Arrow color="#888" /></PlanScroll>
                        </PlanTable>
                        <PlanTools>
                          {(["pageLink", "tools", "openBook", "arrows", "ban", "flag", "redit"] as IconName[]).map((n) => (
                            <ToolButton key={n} $s={20} aria-label={n}><Icon name={n} s={17} /></ToolButton>
                          ))}
                          <span />
                          <ToolButton $s={20} aria-label="Скасувати план"><Icon name="noEntry" s={17} /></ToolButton>
                        </PlanTools>
                      </PlanBox>
                      <ModeRow>
                        <label htmlFor="mode">Режим</label>
                        <Select id="mode" dim light />
                      </ModeRow>
                    </DetailForm>
                    <VScroll $w={15}>
                      <Arrow dir="up" />
                      <Track $before={40} $thumb={107} $after={92} />
                      <Arrow />
                    </VScroll>
                  </DetailRow>
                  <DetailFoot>
                    <FadedButton>Зберегти</FadedButton>
                    <FadedButton>Скасувати</FadedButton>
                    <FadedButton>Далі</FadedButton>
                  </DetailFoot>
                </Detail>
              </DetailPane>
            </RecordBody>
          </Records>

          <Overlay>
            <Dialog role="dialog" aria-labelledby="dialog-title">
              <DialogHead>
                <span id="dialog-title">Препарати (Створення)</span>
                <CloseButton aria-label="Закрити діалог"><Icon name="cross" s={20} /></CloseButton>
              </DialogHead>
              <Form onSubmit={(e) => e.preventDefault()}>
                <FormRow>
                  <Label htmlFor="budget">Бюджет*</Label>
                  <Select id="budget" value="Державний" />
                  <Label htmlFor="inn" $second>МНН</Label>
                  <Select id="inn" />
                </FormRow>
                <FormRow>
                  <Label htmlFor="regimen"><LabelMark /><Marked>Режим ДКП</Marked></Label>
                  <ModeCell>
                    <ModeMark>
                      <ModeTop>
                        <NativeSelect id="regimen"><option>Щоденний</option></NativeSelect>
                        <ModeDrop><Arrow /></ModeDrop>
                      </ModeTop>
                      <Options>
                        <Option>ДКП-П</Option>
                        <Option>Ін'єкційний</Option>
                        <Option $on>Щоденний</Option>
                      </Options>
                    </ModeMark>
                  </ModeCell>
                </FormRow>
                <FormRow $wide>
                  <Label htmlFor="stock">Залишки місця зберігання</Label>
                  <Select id="stock" />
                </FormRow>
                <FormRow $wide>
                  <Label htmlFor="drug">Препарат*</Label>
                  <Select id="drug" value="Абакавіру (Abacavir), таблетки, 300 мг (300 мг), 1x60.0000, посвідчення № UA/16065/01/01" />
                </FormRow>
                <FormRow $h={14} $gap={8}>
                  <Label as="span">Діючі речовини</Label>
                  <Value>Абакавір</Value>
                  <span />
                  <Value>Добова доза 1,00</Value>
                </FormRow>
                <FormRow>
                  <Label htmlFor="route">Спосіб прийому</Label>
                  <Select id="route" value="перорально" />
                  <Label htmlFor="dose" $second>Разова доза*</Label>
                  <Pair $cols="1fr 1fr">
                    <Field><input id="dose" defaultValue="1" /></Field>
                    <Select label="Одиниця дози" value="таблетки USP" />
                  </Pair>
                </FormRow>
                <FormRow>
                  <Label htmlFor="freq">Частота прийому</Label>
                  <Pair $cols="38px 36px 38px 1fr">
                    <Field><input id="freq" defaultValue="1" /></Field>
                    <Between>рази в</Between>
                    <Field><input aria-label="Період" defaultValue="1" /></Field>
                    <Select label="Одиниця періоду" value="День (дні)" dim plain />
                  </Pair>
                  <Label htmlFor="length" $second>Тривалість прийому*</Label>
                  <Pair $cols="1fr 1fr">
                    <Field><input id="length" defaultValue="30" /></Field>
                    <Select label="Одиниця тривалості" value="День (дні)" />
                  </Pair>
                </FormRow>
                <FormRow $gap={8}>
                  <Label htmlFor="start">Дата початку прийому*</Label>
                  <Field><input id="start" defaultValue="01.10.2023" /><Icon name="calendar" s={13} /></Field>
                  <Label htmlFor="end" $second>Дата планового заверш. прийому*</Label>
                  <Field><input id="end" defaultValue="30.10.2023" /><Icon name="calendar" s={13} /></Field>
                </FormRow>
                <FormRow>
                  <Label htmlFor="pack">Тривалість прийому 1 упаковки</Label>
                  <Field><input id="pack" defaultValue="60" /></Field>
                  <Label htmlFor="packs" $second>Необхідна кількість упаковок</Label>
                  <Field><input id="packs" defaultValue="0,5" /></Field>
                </FormRow>
                <FormRow $wide $gap={8}>
                  <Label htmlFor="criterion">Критерій ефект.препарату</Label>
                  <Field><input id="criterion" /></Field>
                </FormRow>
                <FormRow $wide $gap={8}>
                  <Label htmlFor="remark">Примітка</Label>
                  <Field><input id="remark" /></Field>
                </FormRow>
                <Actions>
                  <ActionButton type="submit">Ок</ActionButton>
                  <ActionButton type="button">Скасувати</ActionButton>
                </Actions>
              </Form>
            </Dialog>
          </Overlay>
        </Main>
      </Body>
      <Watermark><b>Активация Windows</b>Чтобы активировать Windows, перейдите в раздел "Параметры".</Watermark>
    </Window>
  );
}
